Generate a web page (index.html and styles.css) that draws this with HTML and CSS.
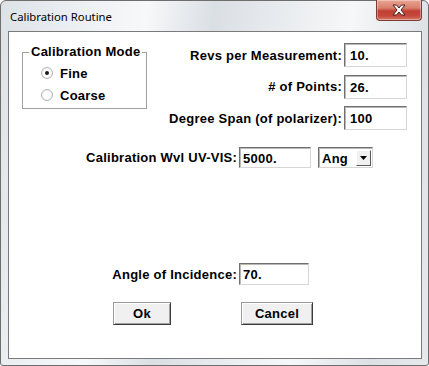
FILE: index.html
```html
<!DOCTYPE html>
<html>
<head>
<title>Calibration Routine</title>
<link rel="stylesheet" href="styles.css">
</head>
<body>

<div class="window">
	<div class="titlebar">
		<span class="title">Calibration Routine</span>
		<div class="close">
			<svg width="16" height="12" viewBox="0 0 16 12">
				<path d="M2 1 L5.5 1 L8 4 L10.5 1 L14 1 L10 6 L14 11 L10.5 11 L8 8 L5.5 11 L2 11 L6 6 Z" fill="#fff" stroke="#4a1a14" stroke-width="1" stroke-linejoin="round"/>
			</svg>
		</div>
	</div>

	<div class="client">
		<div class="top">
			<fieldset class="mode">
				<legend>Calibration Mode</legend>
				<div class="radio"><span class="dot checked"></span>Fine</div>
				<div class="radio"><span class="dot"></span>Coarse</div>
			</fieldset>

			<div class="params">
				<label>Revs per Measurement:</label><input class="field" type="text" value="10.">
				<label># of Points:</label><input class="field" type="text" value="26.">
				<label>Degree Span (of polarizer):</label><input class="field" type="text" value="100">
			</div>
		</div>

		<div class="row wvl">
			<label>Calibration Wvl UV-VIS:</label>
			<input class="field wide" type="text" value="5000.">
			<div class="combo">
				<span>Ang</span>
				<div class="drop"><svg width="7" height="4" viewBox="0 0 7 4"><path d="M0 0 H7 L3.5 4 Z" fill="#000"/></svg></div>
			</div>
		</div>

		<div class="row angle">
			<label>Angle of Incidence:</label>
			<input class="field wide tall" type="text" value="70.">
		</div>

		<div class="buttons">
			<button class="btn ok">Ok</button>
			<button class="btn cancel">Cancel</button>
		</div>
	</div>
</div>

</body>
</html>
```

FILE: styles.css
```css
body {
	margin: 0;
	background: #fff;
}

.window {
	width: 429px;
	height: 366px;
	box-sizing: border-box;
	border: 1px solid #6e6e6e;
	border-radius: 6px 6px 3px 3px;
	background: linear-gradient(100deg, #dde2e7 0%, #eef1f4 18%, #f7f8f9 30%, #dadfe4 44%, #e9ecef 58%, #f6f7f8 72%, #dde1e6 88%, #e6e9ec 100%);
	display: flex;
	flex-direction: column;
}

.titlebar {
	height: 30px;
	display: flex;
	align-items: flex-start;
	justify-content: space-between;
}
.title {
	font-family: "Noto Sans", sans-serif;
	font-size: 11.3px;
	color: #000;
	padding-left: 9px;
	margin-top: 8px;
}
.close {
	width: 46px;
	height: 21px;
	box-sizing: border-box;
	margin: -1px 6px 0 0;
	border: 1px solid #7d3a30;
	border-top: 0;
	border-radius: 0 0 4px 4px;
	background: linear-gradient(#e9a493 0%, #d9806d 40%, #c23f32 55%, #c4493c 80%, #d67a69 100%);
	box-shadow: inset 0 0 0 1px rgba(255, 255, 255, 0.35);
	display: flex;
	align-items: center;
	justify-content: center;
}

.client {
	flex: 1;
	margin: 0 6px 6px 7px;
	border: 1px solid #7a7a7a;
	background: #fff;
	display: flex;
	flex-direction: column;
	font-family: "Liberation Sans", Arial, sans-serif;
	font-size: 13px;
	font-weight: bold;
	letter-spacing: 0.25px;
	color: #000;
}

.top {
	display: flex;
	justify-content: space-between;
	align-items: flex-start;
	margin-top: 11px;
	padding: 0 14px 0 13px;
}

.mode {
	margin: 1px 0 0 0;
	width: 125px;
	box-sizing: border-box;
	padding: 2px 0 2px 6px;
	border: 1px solid #a0a0a0;
	border-radius: 0;
}
.mode legend {
	padding: 0 2px;
	line-height: 16px;
}
.radio {
	height: 22px;
	display: flex;
	align-items: center;
	padding-left: 12px;
}
.dot {
	width: 10px;
	height: 10px;
	border: 1px solid #b4b4b4;
	border-radius: 50%;
	background: radial-gradient(#ffffff 40%, #e6e6e6);
	margin-right: 7px;
	display: flex;
	align-items: center;
	justify-content: center;
}
.dot.checked::after {
	content: "";
	width: 4px;
	height: 4px;
	border-radius: 50%;
	background: #1a1a1a;
}

.params {
	display: grid;
	grid-template-columns: auto 63px;
	column-gap: 2px;
	row-gap: 7.5px;
	align-items: center;
}
.params label {
	text-align: right;
}

.field {
	height: 24px;
	box-sizing: border-box;
	margin: 0;
	padding: 1px 0 0 5px;
	border: 1px solid;
	border-color: #707070 #d6d6d6 #d6d6d6 #707070;
	box-shadow: inset 1px 1px 0 #b8b8b8;
	font: inherit;
	letter-spacing: inherit;
	color: #000;
	background: #fff;
	outline: none;
}
.field.wide {
	width: 72px;
	height: 21px;
	padding-left: 3px;
}
.field.tall {
	width: 70px;
	height: 22px;
}

.row {
	display: flex;
	align-items: center;
}
.row label {
	width: 228px;
	text-align: right;
	margin-right: 2px;
}
.wvl {
	margin-top: 17px;
}
.angle {
	margin-top: 95px;
}

.combo {
	width: 55px;
	height: 21px;
	box-sizing: border-box;
	margin-left: 7px;
	border: 1px solid;
	border-color: #707070 #d6d6d6 #d6d6d6 #707070;
	box-shadow: inset 1px 1px 0 #b8b8b8;
	display: flex;
	align-items: center;
	justify-content: space-between;
	padding: 1px 1px 0 3px;
}
.drop {
	width: 15px;
	height: 16px;
	box-sizing: border-box;
	background: #f0f0f0;
	border: 1px solid;
	border-color: #fff #5a5a5a #5a5a5a #fff;
	display: flex;
	align-items: center;
	justify-content: center;
}

.buttons {
	display: flex;
	margin-top: 17px;
	padding-left: 104px;
	gap: 70px;
}
.btn {
	height: 23px;
	box-sizing: border-box;
	margin: 0;
	padding: 0;
	border: 1px solid;
	border-color: #9a9a9a #3c3c3c #3c3c3c #9a9a9a;
	box-shadow: inset 1px 1px 0 #fff, inset -1px -1px 0 #a0a0a0;
	background: #f0f0f0;
	font: inherit;
	letter-spacing: inherit;
	color: #000;
}
.ok {
	width: 58px;
}
.cancel {
	width: 72px;
}
```
